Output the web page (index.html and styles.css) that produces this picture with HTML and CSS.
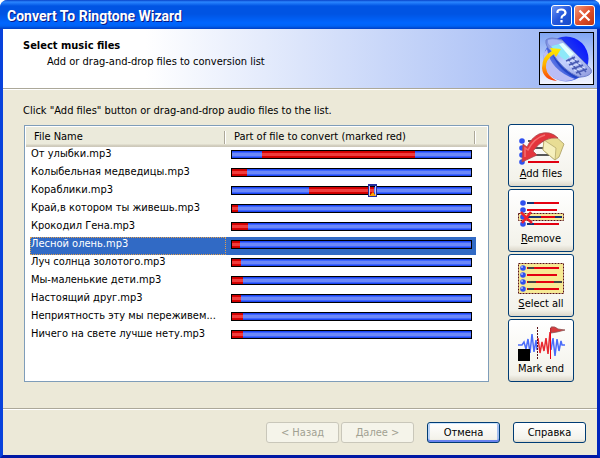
FILE: index.html
```html
<!DOCTYPE html>
<html lang="en">
<head>
  <meta charset="UTF-8">
  <meta name="viewport" content="width=device-width, initial-scale=1.0">
  <title>Convert To Ringtone Wizard</title>
  <link rel="stylesheet" href="styles.css">
</head>
<body>
  <div class="window">

    <!-- Title bar -->
    <div class="title-bar">
      <h1 class="title">Convert To Ringtone Wizard</h1>
      <button class="caption-button help" type="button" aria-label="Help">
        <svg width="19" height="19" viewBox="0 0 19 19" fill="none" stroke="#fff" stroke-width="2.200">
          <path d="M5.500 7V5.500Q6 3.500 9.500 3.500T13.500 6.500Q13.500 8.500 11 9.500Q9.500 10 9.500 12.500"/>
          <path d="M9.500 14V16.500"/>
        </svg>
      </button>
      <button class="caption-button close" type="button" aria-label="Close">
        <svg width="19" height="19" viewBox="0 0 19 19" stroke="#fff" stroke-width="2.200">
          <path d="M4.500 4.500L14.500 14.500M14.500 4.500L4.500 14.500"/>
        </svg>
      </button>
    </div>

    <!-- Header -->
    <div class="header">
      <div class="header-text">
        <h2 class="page-title">Select music files</h2>
        <p class="subtitle">Add or drag-and-drop files to conversion list</p>
      </div>
      <svg class="logo" width="55" height="53" viewBox="0 0 55 53">
        <defs>
          <linearGradient id="sky" x1="0" y1="0" x2="0" y2="1">
            <stop offset="0" stop-color="#7fa4f4"/><stop offset="1" stop-color="#f4f6ff"/>
          </linearGradient>
          <linearGradient id="globe" x1="0.900" y1="0.200" x2="0" y2="0.900">
            <stop offset="0" stop-color="#0a18ff"/><stop offset="0.550" stop-color="#3456dc"/><stop offset="1" stop-color="#b4b9f4"/>
          </linearGradient>
          <linearGradient id="phone" x1="0" y1="0" x2="1" y2="1">
            <stop offset="0" stop-color="#7388e0"/><stop offset="0.500" stop-color="#c4d2ff"/><stop offset="1" stop-color="#8c98dc"/>
          </linearGradient>
          <linearGradient id="swoosh" x1="0" y1="0" x2="0" y2="1">
            <stop offset="0" stop-color="#fff000"/><stop offset="0.500" stop-color="#ffb000"/><stop offset="1" stop-color="#f83810"/>
          </linearGradient>
        </defs>
        <rect x="0.500" y="0.500" width="54" height="52" fill="url(#sky)" stroke="#000"/>
        <circle cx="27" cy="27" r="22.500" fill="url(#globe)"/>
        <path d="M8 17Q11 38 36 47Q26 51 17 47Q2 40 5 21Z" fill="#babdf5"/>
        <path d="M12 17Q16 36 36 46L43 45L24 24Z" fill="#2444c4"/>
        <path d="M7 8Q11 4 23 8L27 12L48 33Q54 38 52 41Q49 45 40 45Q24 39 12 19Q6 14 7 8Z" fill="url(#phone)" stroke="#6f80cc"/>
        <path d="M9 8Q14 6 22 9L24 11L12 14Q8 12 9 8Z" fill="#a6b6f4"/>
        <path d="M12 14L24 11L35 22L26 28Q18 23 12 14Z" fill="#8ee8f8"/>
        <path d="M20 12L24 11L35 22L31 25Z" fill="#e4ffff"/>
        <path d="M27 29L36 25M30 33L40 29M33 37L44 33M37 41L48 37M29 27L42 43M33 25L47 40" stroke="#4a5cb4" stroke-width="1.500"/>
        <path d="M28 31L38 27M31 35L42 31M35 39L46 35" stroke="#dbe4ff"/>
        <path d="M18 49Q4 48 3 36Q3 24 13 19L11 16L22 17L17 25L15 22Q6 28 7 36Q8 44 18 49Z" fill="url(#swoosh)"/>
      </svg>
    </div>

    <!-- Main content -->
    <div class="main-content">
      <p class="hint">Click "Add files" button or drag-and-drop audio files to the list.</p>
      <div class="columns">
        <div class="list">
          <table class="file-table">
            <colgroup>
              <col class="col-name">
              <col>
              <col class="col-rest">
            </colgroup>
            <thead>
              <tr><th>File Name</th><th>Part of file to convert (marked red)</th><th></th></tr>
            </thead>
            <tbody>
              <tr><td><div class="name">От улыбки.mp3</div></td><td><div class="bar"><div class="range" style="margin-left: 12.6%; width: 64%"></div></div></td><td></td></tr>
              <tr><td><div class="name">Колыбельная медведицы.mp3</div></td><td><div class="bar"><div class="range" style="width: 6.3%"></div></div></td><td></td></tr>
              <tr><td><div class="name">Кораблики.mp3</div></td><td><div class="bar"><div class="range" style="margin-left: 32.2%; width: 27.2%"><span class="marker"></span></div></div></td><td></td></tr>
              <tr><td><div class="name">Край,в котором ты живешь.mp3</div></td><td><div class="bar"><div class="range" style="width: 2.5%"></div></div></td><td></td></tr>
              <tr><td><div class="name">Крокодил Гена.mp3</div></td><td><div class="bar"><div class="range" style="width: 6.7%"></div></div></td><td></td></tr>
              <tr class="selected"><td><div class="name">Лесной олень.mp3</div></td><td><div class="bar"><div class="range" style="width: 3.4%"></div></div></td><td></td></tr>
              <tr><td><div class="name">Луч солнца золотого.mp3</div></td><td><div class="bar"><div class="range" style="width: 3.8%"></div></div></td><td></td></tr>
              <tr><td><div class="name">Мы-маленькие дети.mp3</div></td><td><div class="bar"><div class="range" style="width: 4.6%"></div></div></td><td></td></tr>
              <tr><td><div class="name">Настоящий друг.mp3</div></td><td><div class="bar"><div class="range" style="width: 3.8%"></div></div></td><td></td></tr>
              <tr><td><div class="name">Неприятность эту мы переживем...</div></td><td><div class="bar"><div class="range" style="width: 4.6%"></div></div></td><td></td></tr>
              <tr><td><div class="name">Ничего на свете лучше нету.mp3</div></td><td><div class="bar"><div class="range" style="width: 4.6%"></div></div></td><td></td></tr>
            </tbody>
          </table>
        </div>

        <div class="tools">
          <button class="tool-button" type="button">
            <svg width="50" height="35" viewBox="0 0 50 35">
              <path d="M12 10H30M12 17H34M12 24H40" stroke="#222" stroke-width="1.500"/>
              <path d="M12 31H43" stroke="#e00010" stroke-width="2"/>
              <g fill="#2f50f0"><circle cx="6" cy="10" r="2.800"/><circle cx="6" cy="17" r="2.800"/><circle cx="6" cy="24" r="2.800"/><circle cx="6" cy="31" r="2.800"/></g>
              <path d="M28 9L38 4L48 13L43 26L39 29L27 19Z" fill="#e8dd94" stroke="#a89c60" stroke-width="0.800"/>
              <path d="M28 9L40 17L39 29L27 19Z" fill="#f6f0bd" stroke="#b5a96c" stroke-width="0.800"/>
              <path d="M6 31L7 13L11 16Q15 7 23 3Q34 -1 42 7Q28 5 17 20L21 24Z" fill="#e3353c" stroke="#a8484c" stroke-width="0.800"/>
              <path d="M9 26L9 17L12 19Q18 7 29 4" fill="none" stroke="#f47070" stroke-width="1.500"/>
            </svg>
            <span><u>A</u>dd files</span>
          </button>
          <button class="tool-button" type="button">
            <svg width="50" height="35" viewBox="0 0 50 35">
              <rect x="2.500" y="17.500" width="45" height="7" fill="#f7ea94" stroke="#5a1018" stroke-dasharray="2 1"/>
              <path d="M11 7H43M11 14H41M11 21H46M11 28H43" stroke="#e40010" stroke-width="2"/>
              <path d="M11 7H18M11 21H25M39 21H46M11 28H18" stroke="#153275" stroke-width="2"/>
              <g fill="#2f50f0"><circle cx="7" cy="7" r="2.800"/><circle cx="7" cy="14" r="2.800"/><circle cx="7" cy="21" r="2.800"/><circle cx="7" cy="28" r="2.800"/></g>
              <path d="M5 16Q8 20 16 27M15 16Q11 21 6 27" fill="none" stroke="#ef202b" stroke-width="2.500"/>
            </svg>
            <span><u>R</u>emove</span>
          </button>
          <button class="tool-button" type="button">
            <svg width="50" height="35" viewBox="0 0 50 35">
              <rect x="2.500" y="2.500" width="45" height="30" fill="#f7ea94" stroke="#5a1018" stroke-dasharray="2 1"/>
              <path d="M11 7H43M11 14H41M11 21H46M11 28H43" stroke="#e40010" stroke-width="2"/>
              <path d="M12 7H18M12 21H20M38 21H46M12 28H18" stroke="#444" stroke-width="2"/>
              <g fill="#2f50f0"><circle cx="7" cy="7" r="2.800"/><circle cx="7" cy="14" r="2.800"/><circle cx="7" cy="21" r="2.800"/><circle cx="7" cy="28" r="2.800"/></g>
              <g fill="#a9baff"><circle cx="6" cy="6" r="1"/><circle cx="6" cy="13" r="1"/><circle cx="6" cy="20" r="1"/><circle cx="6" cy="27" r="1"/></g>
            </svg>
            <span><u>S</u>elect all</span>
          </button>
          <button class="tool-button" type="button">
            <svg width="50" height="35" viewBox="0 0 50 35" fill="none">
              <path d="M2 19H6L8 16L10 23L12 13L14 27L16 8L18 26L20 14L21 24" stroke="#4a6cfa" stroke-width="1.500"/>
              <path d="M22 12L24 27L26 16L28 25L30 12L32 28L34 6" stroke="#e82830" stroke-width="1.500"/>
              <path d="M35 24L37 12L39 30L41 13L43 25L45 15L46 19H49" stroke="#4a6cfa" stroke-width="1.500"/>
              <path d="M21.500 1V34" stroke="#5a1018" stroke-dasharray="2 1"/>
              <path d="M34.500 2V33" stroke="#f00010"/>
              <path d="M35 1Q39 0 42 3L49 4L41 6L35 7Z" fill="#d83a3c" stroke="#8b5555" stroke-width="0.800"/>
              <path d="M2 23H14V35H2Z" fill="#000"/>
            </svg>
            <span>Mark end</span>
          </button>
        </div>
      </div>
    </div>

    <!-- Footer -->
    <div class="footer">
      <div class="nav-buttons">
        <button class="button" type="button" disabled>&lt; Назад</button>
        <button class="button" type="button" disabled>Далее &gt;</button>
      </div>
      <button class="button default" type="button">Отмена</button>
      <button class="button" type="button">Справка</button>
    </div>
  </div>
</body>
</html>
```

FILE: styles.css
```css
* {
  margin: 0;
  padding: 0;
  box-sizing: border-box;
}

body {
  font-family: "DejaVu Sans Condensed", "DejaVu Sans", Tahoma, sans-serif;
  font-size: 11px;
  line-height: 14px;
  color: #000;
  background: #fff;
}

button {
  font: inherit;
  color: inherit;
}

.window {
  min-height: 100vh;
  display: flex;
  flex-direction: column;
  background: #ece9d8;
  border: 3px solid #0842dc;
  border-top: none;
  border-right-color: #0024bc;
  border-bottom-color: #0018a4;
  border-radius: 8px 8px 0 0;
}

/* Title bar */
.title-bar {
  display: flex;
  align-items: center;
  gap: 2px;
  height: 29px;
  margin: 0 -3px;
  padding: 2px 5px 0 7px;
  border-radius: 7px 7px 0 0;
  background: linear-gradient(#0842c8 0, #2a86ff 2px, #0054e3 6px, #0054e3 14px, #0066ff 23px, #0062f4 26px, #003fc4 29px);
}

.title {
  flex: 1;
  font-family: Roboto, "Trebuchet MS", sans-serif;
  font-size: 14px;
  font-weight: 700;
  color: #fff;
  text-shadow: 1px 1px #0a1883;
}

.caption-button {
  display: flex;
  align-items: center;
  justify-content: center;
  width: 21px;
  height: 21px;
  border: 1px solid #fff;
  border-radius: 3px;
}

.help {
  background: linear-gradient(135deg, #6b95f4, #2457dc 50%, #174bc8);
}

.close {
  background: linear-gradient(135deg, #f0997d, #e1502c 50%, #bc3512);
}

/* Header */
.header {
  display: flex;
  justify-content: space-between;
  height: 60px;
  padding: 3px 3px 0 20px;
  background: linear-gradient(90deg, #fff 24%, #a6bdf5 90%);
  border-bottom: 1px solid #aca899;
}

.header-text {
  padding-top: 7px;
}

.page-title {
  font-size: 11px;
  font-weight: 700;
}

.subtitle {
  padding: 2px 0 0 24px;
}

/* Main content */
.main-content {
  flex: 1;
  padding: 14px 23px 0 20px;
  border-top: 1px solid #fff;
}

.columns {
  display: flex;
  gap: 19px;
  margin-top: 6px;
}

.list {
  flex: 1;
  margin: 1px 0 0 1px;
  padding: 1px;
  background: #fff;
  border: 1px solid #7f9db9;
}

.file-table {
  width: 100%;
  table-layout: fixed;
  border-collapse: collapse;
}

.col-name {
  width: 200px;
}

.col-rest {
  width: 11px;
}

.file-table th {
  height: 20px;
  padding-left: 8px;
  font-weight: 400;
  text-align: left;
  background: linear-gradient(90deg, #aca899 1px, #fff 1px) right / 2px 13px no-repeat, linear-gradient(#ebeadb 17px, #d6d2c2 18px, #cbc7b8);
}

.file-table th:last-child {
  background: linear-gradient(#ebeadb 17px, #d6d2c2 18px, #cbc7b8);
}

.file-table td {
  height: 18px;
  vertical-align: top;
}

.name {
  height: 18px;
  margin-left: 4px;
  padding: 0 1px;
  white-space: nowrap;
}

.bar {
  height: 9px;
  margin: 3px 4px 0 5px;
  border: 1px solid #000;
  background: linear-gradient(#1c45f0 1px, #3f66ff 1px, #3f66ff 2px, #6c88f8 2px, #6c88f8 5px, #3f66ff 5px, #3f66ff 6px, #1c45f0 6px);
}

.range {
  position: relative;
  height: 7px;
  background: linear-gradient(#c80000 1px, #d80000 1px, #d80000 2px, #f03c3c 2px, #f03c3c 5px, #d80000 5px, #d80000 6px, #c80000 6px);
}

/* Drag handle over the end of the range */
.marker {
  position: absolute;
  top: -3px;
  right: -3px;
  width: 9px;
  height: 13px;
  border: 1px solid #2230a0;
  border-top-width: 2px;
  background: linear-gradient(90deg, #c8c8f0 1px, transparent 1px, transparent 6px, #c8c8f0 6px);
}

.marker::after {
  content: "";
  position: absolute;
  left: 0;
  bottom: 0;
  border: solid transparent;
  border-width: 0 3px 4px 4px;
  border-bottom-color: #ffa000;
}

.selected .name {
  color: #fff;
  background: #316ac5;
  outline: 1px dotted #e0a050;
  outline-offset: -1px;
}

.selected td:nth-child(2) {
  background: #316ac5;
}

/* Tool buttons */
.tools {
  display: flex;
  flex-direction: column;
  gap: 2px;
}

.tool-button {
  display: flex;
  flex-direction: column;
  align-items: center;
  justify-content: center;
  gap: 1px;
  width: 66px;
  height: 63px;
  padding-top: 1px;
  border: 1px solid #003c74;
  border-radius: 3px;
  background: linear-gradient(#fff, #f3f2ea 90%, #dcd7ca);
}

/* Footer */
.footer {
  display: flex;
  justify-content: flex-end;
  gap: 13px;
  height: 47px;
  padding: 13px 11px 0;
  border-top: 1px solid #aca899;
  box-shadow: inset 0 1px #fff;
}

.nav-buttons {
  display: flex;
  gap: 2px;
}

.button {
  width: 73px;
  height: 21px;
  border: 1px solid #003c74;
  border-radius: 3px;
  background: linear-gradient(#fff, #f3f2ea 85%, #dcd7ca);
}

.button:disabled {
  color: #a1a192;
  border-color: #c9c7ba;
  background: #f5f4ea;
}

.default {
  box-shadow: inset 0 1px #cee7ff, inset 0 -2px #6982ee, inset 2px 0 #bcd4f6, inset -2px 0 #a4bff0;
}
```
